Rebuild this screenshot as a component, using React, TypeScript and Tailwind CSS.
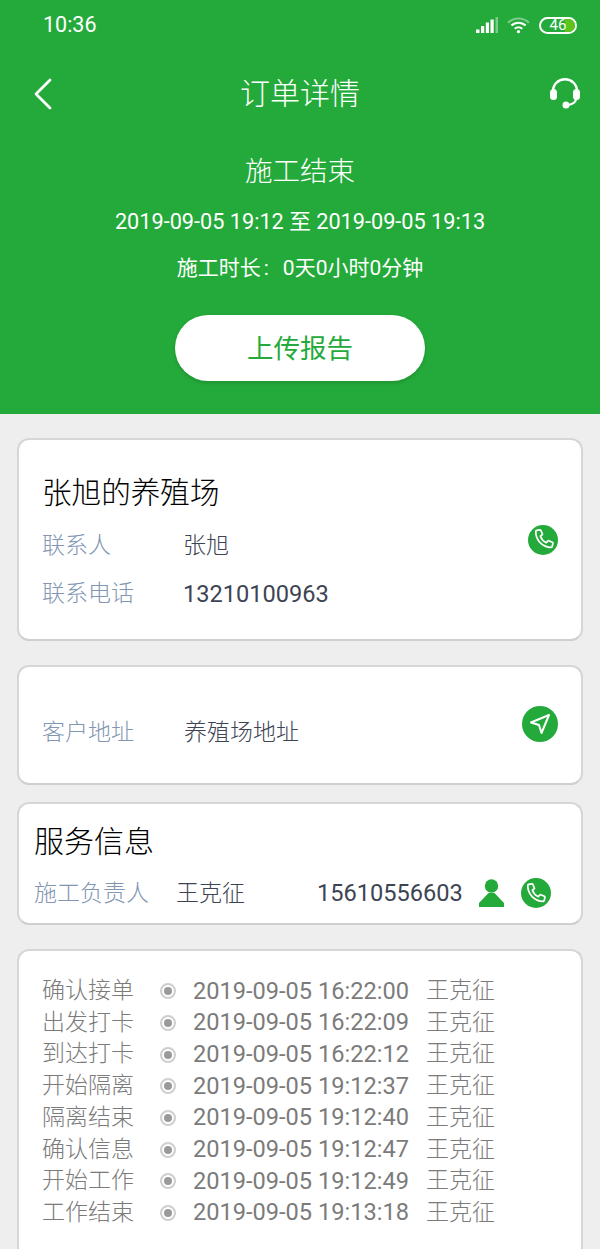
import React from "react";

function Phone({ size = 30 }: { size?: number }) {
  return (
    <span className="flex items-center justify-center rounded-full bg-[#24aa3a] shrink-0" style={{ width: size, height: size }}>
      <svg width={size * 0.76} height={size * 0.76} viewBox="0 0 24 24" fill="none" stroke="#fff" strokeWidth="1.800" strokeLinejoin="round" strokeLinecap="round">
        <path d="M5 2.500l3.200-.6c.5-.1.9.2 1.100.6l1.600 3.600c.2.4.1.9-.3 1.200L8.800 8.700c1 2.600 3.600 5.600 6.300 6.800l1.500-1.800c.3-.4.8-.5 1.200-.3l3.600 1.700c.4.2.7.7.6 1.100l-.7 3.200c-.1.5-.5.9-1 .9C11 20.300 3.700 12.600 4 3.500c0-.5.400-.900 1-1z" />
      </svg>
    </span>
  );
}

const steps = [
  ["确认接单", "2019-09-05 16:22:00"],
  ["出发打卡", "2019-09-05 16:22:09"],
  ["到达打卡", "2019-09-05 16:22:12"],
  ["开始隔离", "2019-09-05 19:12:37"],
  ["隔离结束", "2019-09-05 19:12:40"],
  ["确认信息", "2019-09-05 19:12:47"],
  ["开始工作", "2019-09-05 19:12:49"],
  ["工作结束", "2019-09-05 19:13:18"],
];

const card = "mx-[17px] bg-white rounded-[12px] border-2 border-[#d6d6d6] border-b-[#cfcfcf]";

export default function App() {
  return (
    <div className="w-[600px] h-[1249px] overflow-hidden bg-[#eeeeee] font-['Roboto','Noto_Sans_CJK_SC',sans-serif] font-light">
      <header className="h-[414px] bg-[#24aa3a] text-white flex flex-col items-center">
        <div className="w-full h-[50px] flex items-center justify-between pl-[43px] pr-[23px]">
          <span className="text-[21.500px] leading-none font-normal">10:36</span>
          <div className="flex items-center gap-[9px]">
            <svg width="22" height="16" viewBox="0 0 22 16" fill="#fff">
              <rect x="0" y="12.500" width="3.500" height="3.500" />
              <rect x="5" y="9" width="3.200" height="7" />
              <rect x="9.800" y="5.500" width="3.200" height="10.500" />
              <rect x="14.500" y="2.500" width="3.200" height="13.500" />
              <rect x="19.500" y="0" width="2.500" height="16" fillOpacity="0.4" />
            </svg>
            <svg width="23" height="17" viewBox="0 0 24 18" fill="none" stroke="#fff" strokeWidth="2.200">
              <path d="M1 6c6-6 16-6 22 0" strokeOpacity="0.4" />
              <path d="M4.500 9c4.200-4 10.800-4 15 0" />
              <path d="M8 12.500c2.400-2 5.600-2 8 0" />
              <circle cx="12" cy="15.500" r="1.700" fill="#fff" stroke="none" />
            </svg>
            <span className="relative flex items-center justify-center w-[38px] h-[17px] rounded-full border-2 border-white text-[15px] leading-none font-normal overflow-hidden">
              <span className="absolute right-0 top-0 bottom-0 w-[10px] bg-[#5cc41a]" />
              <span className="relative">46</span>
            </span>
          </div>
        </div>
        <div className="w-full h-[86px] grid grid-cols-[1fr_auto_1fr] items-center px-[30px] pt-[1px]">
          <svg width="24" height="32" viewBox="0 0 24 32" fill="none" stroke="#fff" strokeWidth="2.800" strokeLinecap="round" strokeLinejoin="round">
            <path d="M20 2L6 16l14 14" />
          </svg>
          <span className="text-[30px] leading-none">订单详情</span>
          <svg className="justify-self-end mr-[-11px]" width="32" height="31" viewBox="0 0 32 31" fill="none">
            <path d="M4 14V13C4 6 9.500 1.300 16 1.300S28 6 28 13v1" stroke="#fff" strokeWidth="2.400" />
            <rect x="1" y="11" width="7" height="11" rx="3.500" fill="#fff" />
            <rect x="24" y="11" width="7" height="11" rx="3.500" fill="#fff" />
            <path d="M27 21c0 3-4 6-9 6" stroke="#fff" strokeWidth="2.200" />
            <circle cx="17" cy="27" r="3.500" fill="#fff" />
          </svg>
        </div>
        <div className="text-[27.500px] leading-none mt-[22px]">施工结束</div>
        <div className="text-[21.700px] leading-none mt-[25px] font-normal">2019-09-05 19:12 至 2019-09-05 19:13</div>
        <div className="text-[21px] leading-none mt-[26px] font-normal">
          施工时长<span className="ml-[3px] mr-[14px]">:</span>0天0小时0分钟
        </div>
        <button className="mt-[36px] w-[250px] h-[66px] pt-[2px] rounded-full bg-white text-[#24aa3a] text-[26.500px] font-normal shadow-[0_2px_4px_rgba(0,0,0,0.15)]">上传报告</button>
      </header>

      <section className={`${card} mt-[24px] h-[203px] pl-[23px] pr-[23px] pt-[39px]`}>
        <div className="text-[29.600px] leading-none text-black">张旭的养殖场</div>
        <div className="flex items-center h-[48px] mt-[14px] text-[23px] relative">
          <span className="w-[141px] text-[#8296b2]">联系人</span>
          <span className="text-[#3d4454]">张旭</span>
          <span className="absolute right-0 top-[2px]"><Phone /></span>
        </div>
        <div className="flex items-center h-[48px] text-[23px]">
          <span className="w-[141px] text-[#8296b2]">联系电话</span>
          <span className="text-[#3d4454] font-normal text-[23.600px]">13210100963</span>
        </div>
      </section>

      <section className={`${card} mt-[24px] h-[120px] pl-[23px] pr-[23px] flex items-center justify-between text-[23px]`}>
        <div className="flex items-center mt-[16px]">
          <span className="w-[142px] text-[#8296b2]">客户地址</span>
          <span className="text-[#3d4454]">养殖场地址</span>
        </div>
        <span className="flex items-center justify-center w-[36px] h-[36px] rounded-full bg-[#24aa3a] mb-[2px]">
          <svg width="24" height="24" viewBox="0 0 24 24" fill="none" stroke="#fff" strokeWidth="2" strokeLinejoin="round">
            <path d="M21 3L3 10.500l8 2.500 2.500 8z" />
          </svg>
        </span>
      </section>

      <section className={`${card} mt-[17px] h-[123px] pl-[15px] pr-[30px] pt-[23px]`}>
        <div className="text-[30px] leading-none text-black">服务信息</div>
        <div className="flex items-center mt-[14px] h-[46px] text-[23px]">
          <span className="w-[142px] text-[#8296b2]">施工负责人</span>
          <span className="w-[141px] text-[#3d4454]">王克征</span>
          <span className="text-[#3d4454] font-normal text-[23.600px]">15610556603</span>
          <svg className="ml-[16px] mb-[2px]" width="25" height="28" viewBox="0 0 25 28" fill="#24aa3a">
            <circle cx="12.500" cy="7" r="6.700" />
            <path d="M9.500 14h6l9.500 10v4H0v-4z" />
          </svg>
          <span className="ml-[17px] mb-[2px]"><Phone /></span>
        </div>
      </section>

      <section className={`${card} mt-[24px] h-[340px] pl-[23px] pt-[24.500px]`}>
        {steps.map(([name, time]) => (
          <div key={time} className="flex items-center h-[31.700px] text-[23px] text-[#7b7b7b]">
            <span className="w-[118px]">{name}</span>
            <span className="w-[16px] h-[16px] mr-[17px] rounded-full border-2 border-[#cfcfcf] flex items-center justify-center">
              <span className="w-[8px] h-[8px] rounded-full bg-[#9a9a9a]" />
            </span>
            <span className="w-[233px] font-normal text-[23.600px]">{time}</span>
            <span>王克征</span>
          </div>
        ))}
      </section>
    </div>
  );
}
